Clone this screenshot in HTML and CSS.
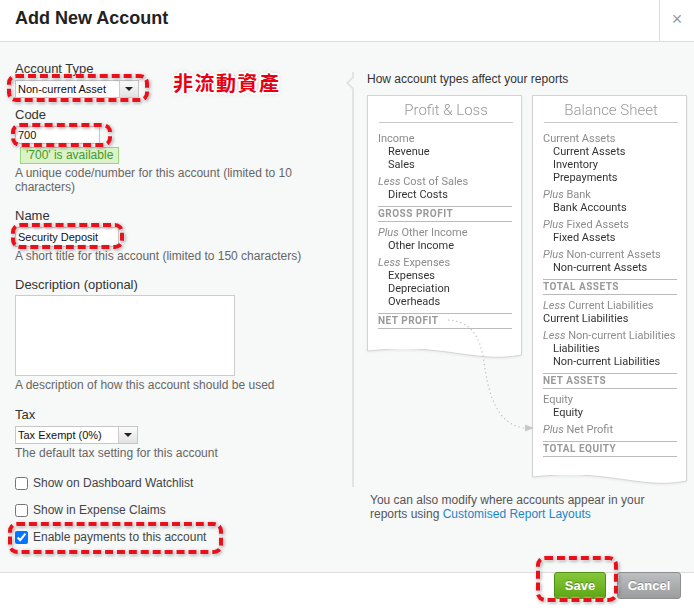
FILE: index.html
```html
<!DOCTYPE html>
<html lang="en">
<head>
  <meta charset="UTF-8" />
  <meta name="viewport" content="width=device-width, initial-scale=1.0">
  <title>Add New Account</title>
  <link rel="stylesheet" href="styles.css">
</head>
<body>
  <div class="modal">
    <div class="modal-header">
      <h1 class="modal-title">Add New Account</h1>
      <button class="close-button">×</button>
    </div>

    <div class="modal-body">
      <form class="account-form">
        <div class="form-group first">
          <label class="field-label">Account Type</label>
          <div class="type-row">
            <div class="mark mark-type">
              <div class="select type-select">
                <span class="select-value">Non-current Asset</span>
                <span class="select-arrow"></span>
              </div>
            </div>
            <span class="callout">非流動資產</span>
          </div>
        </div>

        <div class="form-group tight">
          <label class="field-label" for="code">Code</label>
          <div class="mark mark-code">
            <input type="text" class="text-input code-input" id="code" value="700" />
          </div>
          <div class="available">'700' is available</div>
          <p class="hint">A unique code/number for this account (limited to 10 characters)</p>
        </div>

        <div class="form-group name-group">
          <label class="field-label" for="name">Name</label>
          <div class="mark mark-name">
            <input type="text" class="text-input name-input" id="name" value="Security Deposit" />
          </div>
          <p class="hint">A short title for this account (limited to 150 characters)</p>
        </div>

        <div class="form-group desc-group">
          <label class="field-label desc-label" for="description">Description (optional)</label>
          <textarea class="text-area" id="description"></textarea>
          <p class="hint">A description of how this account should be used</p>
        </div>

        <div class="form-group">
          <label class="field-label">Tax</label>
          <div class="select tax-select">
            <span class="select-value">Tax Exempt (0%)</span>
            <span class="select-arrow"></span>
          </div>
          <p class="hint">The default tax setting for this account</p>
        </div>

        <div class="form-group checks">
          <label class="check"><input type="checkbox" /> Show on Dashboard Watchlist</label>
          <label class="check"><input type="checkbox" /> Show in Expense Claims</label>
          <div class="mark mark-pay">
            <label class="check"><input type="checkbox" checked /> Enable payments to this account</label>
          </div>
        </div>
      </form>

      <div class="reports">
        <div class="reports-box">
          <p class="reports-title">How account types affect your reports</p>

          <div class="sheets">
            <div class="sheet">
              <div class="sheet-body">
                <h2 class="sheet-title">Profit &amp; Loss</h2>
                <div class="sheet-list pl-list">
                  <div class="group">
                    <div class="sec">Income</div>
                    <div class="item">Revenue</div>
                    <div class="item">Sales</div>
                  </div>
                  <div class="group">
                    <div class="sec"><em>Less</em> Cost of Sales</div>
                    <div class="item">Direct Costs</div>
                  </div>
                  <div class="total">Gross Profit</div>
                  <div class="group">
                    <div class="sec"><em>Plus</em> Other Income</div>
                    <div class="item">Other Income</div>
                  </div>
                  <div class="group">
                    <div class="sec"><em>Less</em> Expenses</div>
                    <div class="item">Expenses</div>
                    <div class="item">Depreciation</div>
                    <div class="item">Overheads</div>
                  </div>
                  <div class="total">Net Profit</div>
                </div>
              </div>
              <svg class="sheet-edge" viewBox="0 0 155 12" preserveAspectRatio="none">
                <path d="M0.5 0 V2 C 30 -1, 50 -1, 80 3 S 130 11, 154.5 6 V0 Z" fill="#fff" />
                <path d="M0.5 0 V2 C 30 -1, 50 -1, 80 3 S 130 11, 154.5 6 V0" fill="none" stroke="#d4d4d4" />
              </svg>
            </div>

            <div class="sheet">
              <div class="sheet-body">
                <h2 class="sheet-title">Balance Sheet</h2>
                <div class="sheet-list bs-list">
                  <div class="group">
                    <div class="sec">Current Assets</div>
                    <div class="item">Current Assets</div>
                    <div class="item">Inventory</div>
                    <div class="item">Prepayments</div>
                  </div>
                  <div class="group">
                    <div class="sec"><em>Plus</em> Bank</div>
                    <div class="item">Bank Accounts</div>
                  </div>
                  <div class="group">
                    <div class="sec"><em>Plus</em> Fixed Assets</div>
                    <div class="item">Fixed Assets</div>
                  </div>
                  <div class="group">
                    <div class="sec"><em>Plus</em> Non-current Assets</div>
                    <div class="item">Non-current Assets</div>
                  </div>
                  <div class="total">Total Assets</div>
                  <div class="group">
                    <div class="sec"><em>Less</em> Current Liabilities</div>
                    <div class="item flush">Current Liabilities</div>
                  </div>
                  <div class="group">
                    <div class="sec"><em>Less</em> Non-current Liabilities</div>
                    <div class="item">Liabilities</div>
                    <div class="item">Non-current Liabilities</div>
                  </div>
                  <div class="total">Net Assets</div>
                  <div class="group">
                    <div class="sec">Equity</div>
                    <div class="item">Equity</div>
                  </div>
                  <div class="group">
                    <div class="sec"><em>Plus</em> Net Profit</div>
                  </div>
                  <div class="total">Total Equity</div>
                </div>
              </div>
              <svg class="sheet-edge" viewBox="0 0 155 12" preserveAspectRatio="none">
                <path d="M0.5 0 V2 C 30 -1, 50 -1, 80 3 S 130 11, 154.5 6 V0 Z" fill="#fff" />
                <path d="M0.5 0 V2 C 30 -1, 50 -1, 80 3 S 130 11, 154.5 6 V0" fill="none" stroke="#d4d4d4" />
              </svg>
            </div>
          </div>

          <!-- net profit flows into equity -->
          <svg class="flow-arrow" width="190" height="362" viewBox="0 0 190 362">
            <path d="M94 248 C 115 249, 126 262, 130 290 C 134 320, 142 352, 170 356" fill="none" stroke="#bdbdbd" stroke-width="1.2" stroke-dasharray="1.2 3" />
            <polygon points="171,352.5 180,356 171,359.5" fill="#c8c8c8" />
          </svg>
        </div>

        <p class="reports-note">You can also modify where accounts appear in your reports using <a href="#" class="link">Customised Report Layouts</a></p>
      </div>
    </div>

    <div class="modal-footer">
      <div class="mark mark-save">
        <button class="btn btn-save">Save</button>
      </div>
      <button class="btn btn-cancel">Cancel</button>
    </div>
  </div>
</body>
</html>
```

FILE: styles.css
```css
* {
  margin: 0;
  padding: 0;
  box-sizing: border-box;
}

html, body {
  height: 100%;
}

body {
  font-family: "Liberation Sans", Arial, sans-serif;
  color: #333;
  background: #fff;
  overflow: hidden;
}

.modal {
  height: 100vh;
  display: flex;
  flex-direction: column;
}

/* header */

.modal-header {
  height: 42px;
  flex-shrink: 0;
  display: flex;
  border-bottom: 1px solid #ddd;
}

.modal-title {
  flex: 1;
  padding-left: 15px;
  font-size: 18px;
  font-weight: bold;
  line-height: 36px;
  color: #222;
}

.close-button {
  width: 35px;
  border: none;
  border-left: 1px solid #ddd;
  background: #fff;
  color: #999;
  font-family: "Liberation Sans", Arial, sans-serif;
  font-size: 18px;
  line-height: 36px;
  padding-bottom: 4px;
  cursor: pointer;
}

/* body */

.modal-body {
  flex: 1;
  background: #f7f8f8;
  display: grid;
  grid-template-columns: 315px 1fr;
  column-gap: 22px;
  align-items: start;
  padding: 19px 7px 0 15px;
}

.form-group {
  margin-top: 15px;
}

.form-group.first {
  margin-top: 0;
}

.form-group.tight {
  margin-top: 9px;
}

.form-group.name-group {
  margin-top: 14px;
}

.form-group.desc-group {
  margin-top: 14px;
}

.form-group.checks {
  margin-top: 16px;
}

.field-label {
  display: block;
  font-size: 13px;
  line-height: 15px;
  color: #333;
  margin-bottom: 4px;
}

.desc-label {
  margin-bottom: 3px;
}

.hint {
  margin-top: 2px;
  font-size: 12px;
  line-height: 14px;
  color: #666;
}

.type-row {
  display: flex;
  align-items: flex-start;
}

.select {
  display: flex;
  height: 18px;
  border: 1px solid #c6c6c6;
  background: #fff;
  font-size: 11px;
}

.type-select {
  width: 124px;
}

.tax-select {
  width: 123px;
}

.select-value {
  flex: 1;
  padding-left: 2px;
  line-height: 16px;
  color: #111;
}

.select-arrow {
  width: 19px;
  position: relative;
  border-left: 1px solid #ccc;
  background: linear-gradient(#fbfbfb, #e3e3e3);
}

.select-arrow::after {
  content: '';
  position: absolute;
  left: 5px;
  top: 6px;
  border-left: 4px solid transparent;
  border-right: 4px solid transparent;
  border-top: 4px solid #222;
}

.text-input {
  display: block;
  height: 18px;
  border: 1px solid #c6c6c6;
  background: #fff;
  box-shadow: inset 0 1px 1px rgba(0, 0, 0, 0.06);
  font-family: "Liberation Sans", Arial, sans-serif;
  font-size: 11px;
  color: #111;
  padding: 0 2px;
  outline: none;
}

.code-input {
  width: 85px;
}

.name-input {
  width: 104px;
  height: 20px;
}

.available {
  width: max-content;
  margin: 3px 0 0 5px;
  padding: 0 5px;
  border: 1px solid #9ad57a;
  background: #dbf2cb;
  color: #3f9b27;
  font-size: 12px;
  line-height: 15px;
}

.text-area {
  display: block;
  width: 220px;
  height: 81px;
  border: 1px solid #ccc;
  background: #fff;
  resize: none;
  outline: none;
}

.checks {
  display: flex;
  flex-direction: column;
  align-items: flex-start;
  gap: 12px;
}

.check {
  display: inline-flex;
  align-items: center;
  gap: 5px;
  font-size: 12px;
  line-height: 15px;
  color: #444;
}

.check input {
  width: 13px;
  height: 13px;
  margin: 0;
}

/* red dashed annotations */

.mark {
  position: relative;
  display: flex;
  width: max-content;
}

.mark::after {
  content: '';
  position: absolute;
  border: 4px dashed #e8101a;
  border-radius: 9px;
  pointer-events: none;
  filter: drop-shadow(0 0 1px #fff) drop-shadow(1px 1px 1.5px rgba(0, 0, 0, 0.35));
}

.mark-type::after { top: -6px; right: -10px; bottom: -4px; left: -8px; }
.mark-code::after { top: -3px; right: -12px; bottom: -3px; left: -4px; }
.mark-name::after { top: -4px; right: -5px; bottom: -2px; left: -4px; }
.mark-pay::after { top: -8px; right: -17px; bottom: -9px; left: -7px; }
.mark-save::after { top: -17px; right: -12px; bottom: -3px; left: -18px; }

.callout {
  margin: -9px 0 0 34px;
  font-family: "Noto Sans CJK TC", "Noto Sans CJK JP", sans-serif;
  font-size: 20px;
  font-weight: bold;
  line-height: 24px;
  letter-spacing: 1.5px;
  color: #e60012;
  text-shadow: 2px 0 #fff, -2px 0 #fff, 0 2px #fff, 0 -2px #fff,
    1.5px 1.5px #fff, -1.5px -1.5px #fff, 1.5px -1.5px #fff, -1.5px 1.5px #fff,
    0 0 5px rgba(0, 0, 0, 0.35);
}

/* report preview */

.reports {
  margin-top: 11px;
}

.reports-box {
  position: relative;
  border-left: 2px solid #e3e3e3;
  padding-left: 13px;
}

.reports-box::before {
  content: '';
  position: absolute;
  left: -6px;
  top: 6px;
  width: 8px;
  height: 8px;
  background: #f7f8f8;
  border-left: 2px solid #e3e3e3;
  border-bottom: 2px solid #e3e3e3;
  transform: rotate(45deg);
}

.reports-title {
  font-size: 12px;
  line-height: 14px;
  color: #333;
  margin-bottom: 9px;
}

.sheets {
  display: grid;
  grid-template-columns: 155px 155px;
  column-gap: 10px;
  align-items: start;
}

.sheet {
  filter: drop-shadow(0 1px 1px rgba(0, 0, 0, 0.06));
}

.sheet-body {
  background: #fff;
  border: 1px solid #d4d4d4;
  border-bottom: none;
  padding: 0 9px 0 10px;
  font-family: Roboto, "Liberation Sans", sans-serif;
  font-size: 11px;
  line-height: 13px;
}

.sheet-title {
  margin: 0 -1px 0 1px;
  padding: 5px 0 3px;
  border-bottom: 1px solid #c8c8c8;
  font-size: 15px;
  font-weight: 300;
  line-height: 18px;
  color: #999;
  text-align: center;
}

.sheet-list {
  padding-top: 9px;
}

.pl-list {
  padding-bottom: 17px;
}

.bs-list {
  padding-bottom: 15px;
}

.sheet-edge {
  display: block;
  width: 155px;
  height: 12px;
  margin-top: -1px;
}

.group + .group {
  margin-top: 4px;
}

.sec {
  color: #8c8c8c;
}

.sec em {
  font-style: italic;
}

.item {
  padding-left: 10px;
  color: #333;
}

.item.flush {
  padding-left: 0;
}

.total {
  margin: 5px 0 4px;
  border-top: 1px solid #bbb;
  border-bottom: 1px solid #bbb;
  font-size: 10px;
  font-weight: bold;
  line-height: 14px;
  letter-spacing: 0.5px;
  text-transform: uppercase;
  color: #999;
}

.flow-arrow {
  position: absolute;
  left: 0;
  top: 0;
  overflow: visible;
  pointer-events: none;
}

.reports-note {
  width: 290px;
  margin-top: 6px;
  padding-left: 18px;
  font-size: 12px;
  line-height: 14px;
  color: #555;
  box-sizing: content-box;
}

.link {
  color: #1a87c9;
  text-decoration: none;
}

/* footer */

.modal-footer {
  height: 39px;
  flex-shrink: 0;
  border-top: 1px solid #ddd;
  display: flex;
  justify-content: flex-end;
  align-items: flex-start;
  gap: 11px;
  padding-right: 13px;
}

.btn {
  height: 27px;
  margin-top: -1px;
  border: 1px solid;
  border-radius: 3px;
  font-family: "Liberation Sans", Arial, sans-serif;
  font-size: 13px;
  font-weight: bold;
  color: #fff;
  text-shadow: 0 -1px 0 rgba(0, 0, 0, 0.25);
  cursor: pointer;
}

.btn-save {
  width: 52px;
  background: linear-gradient(#85c83a, #5da614);
  border-color: #4f9012;
}

.btn-cancel {
  width: 64px;
  background: linear-gradient(#bdbebf, #9c9d9f);
  border-color: #8d8e90;
}
```
